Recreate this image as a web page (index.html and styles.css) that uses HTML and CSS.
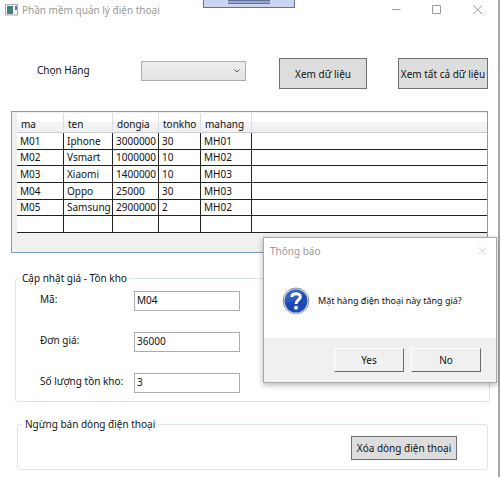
FILE: index.html
```html
<!DOCTYPE html>
<html lang="vi">
<head>
<meta charset="utf-8">
<title>Phần mềm quản lý điện thoại</title>
<link rel="stylesheet" href="styles.css">
</head>
<body>
<main class="window">
  <header class="titlebar">
    <svg class="app-icon" width="13" height="12" viewBox="0 0 13 12" aria-hidden="true">
      <rect x=".5" y=".5" width="12" height="10.5" fill="#f4f4f4" stroke="#aaa"/>
      <rect x="2" y="2" width="6" height="8" fill="#43817b"/>
      <rect x="10" y="2" width="2" height="4" fill="#5280b0"/>
    </svg>
    <h1 class="title">Phần mềm quản lý điện thoại</h1>
    <div class="window-controls">
      <button class="control" aria-label="Thu nhỏ"><svg width="10" height="10" viewBox="0 0 10 10"><path d="M1 4.500h8.500"/></svg></button>
      <button class="control" aria-label="Phóng to"><svg width="10" height="10" viewBox="0 0 10 10"><path d="M.5 .5h8v8h-8z"/></svg></button>
      <button class="control" aria-label="Đóng"><svg width="10" height="10" viewBox="0 0 10 10"><path d="M.5 .5l8.500 8.500M9 .5l-8.500 8.500"/></svg></button>
    </div>
    <div class="debug-bar"><span class="grip"></span></div>
  </header>

  <section class="filter">
    <label class="filter-label" for="brand">Chọn Hãng</label>
    <div class="select-box">
      <select id="brand" class="brand"><option></option></select>
      <svg class="chevron" width="6" height="4" viewBox="0 0 6 4" aria-hidden="true"><path d="M.5 .5L3 3L5.500 .5"/></svg>
    </div>
    <button class="button button-tall">Xem dữ liệu</button>
    <button class="button button-tall button-all">Xem tất cả dữ liệu</button>
  </section>

  <section class="grid-frame">
    <table class="grid">
      <colgroup><col class="c-ma"><col class="c-ten"><col class="c-gia"><col class="c-ton"><col class="c-hang"><col></colgroup>
      <thead><tr><th>ma</th><th>ten</th><th>dongia</th><th>tonkho</th><th>mahang</th><th></th></tr></thead>
      <tbody>
        <tr><td>M01</td><td>Iphone</td><td>3000000</td><td>30</td><td>MH01</td><td></td></tr>
        <tr><td>M02</td><td>Vsmart</td><td>1000000</td><td>10</td><td>MH02</td><td></td></tr>
        <tr><td>M03</td><td>Xiaomi</td><td>1400000</td><td>10</td><td>MH03</td><td></td></tr>
        <tr><td>M04</td><td>Oppo</td><td>25000</td><td>30</td><td>MH03</td><td></td></tr>
        <tr><td>M05</td><td>Samsung</td><td>2900000</td><td>2</td><td>MH02</td><td></td></tr>
        <tr><td></td><td></td><td></td><td></td><td></td><td></td></tr>
      </tbody>
    </table>
  </section>

  <fieldset class="group group-update">
    <legend>Cập nhật giá - Tồn kho</legend>
    <div class="fields">
      <label for="code">Mã:</label><input id="code" type="text" value="M04">
      <label for="price">Đơn giá:</label><input id="price" type="text" value="36000">
      <label for="stock">Số lượng tồn kho:</label><input id="stock" type="text" value="3">
    </div>
  </fieldset>

  <fieldset class="group group-stop">
    <legend>Ngừng bán dòng điện thoại</legend>
    <button class="button button-delete">Xóa dòng điện thoại</button>
  </fieldset>
</main>

<div class="dialog" role="dialog" aria-labelledby="dialog-title">
  <div class="dialog-head">
    <h2 class="dialog-title" id="dialog-title">Thông báo</h2>
    <button class="dialog-close" aria-label="Đóng"><svg width="10" height="10" viewBox="0 0 10 10"><path d="M1 1l8 8M9 1l-8 8"/></svg></button>
  </div>
  <div class="dialog-body">
    <svg class="question" width="28" height="28" viewBox="0 0 28 28" aria-hidden="true">
      <defs>
        <linearGradient id="ball" x1="0" y1="0" x2="1" y2="1"><stop offset="0" stop-color="#2c5fd0"/><stop offset=".5" stop-color="#1c46b0"/><stop offset="1" stop-color="#2450b8"/></linearGradient>
        <linearGradient id="rim" x1="0" y1="0" x2="0" y2="1"><stop offset="0" stop-color="#8e9296"/><stop offset="1" stop-color="#a4a6a8"/></linearGradient>
      </defs>
      <circle cx="14" cy="14" r="13" fill="#dfe1e3" stroke="url(#rim)"/>
      <circle cx="14" cy="14" r="11.500" fill="url(#ball)"/>
      <path d="M3 15A11 11 0 0 1 23 7Q17 15 3 15z" fill="#5b86e4" opacity=".25"/>
      <path d="M9.800 10C9.900 5.700 18.300 5.600 18.300 9.900C18.300 13 14 13 14 17" fill="none" stroke="#fff" stroke-width="3"/>
      <circle cx="14" cy="20.800" r="2" fill="#fff"/>
    </svg>
    <p class="message">Mặt hàng điện thoại này tăng giá?</p>
  </div>
  <div class="dialog-foot">
    <button class="dialog-button">Yes</button>
    <button class="dialog-button">No</button>
  </div>
</div>
</body>
</html>
```
FILE: styles.css
```css
* {
  box-sizing: border-box;
}

body {
  margin: 0;
  min-height: 100vh;
  display: flex;
  position: relative;
  overflow: hidden;
  background: #fff;
  color: #111;
  font-family: "Noto Sans", "Open Sans", sans-serif;
  font-size: 10px;
  line-height: 14px;
}

button, input, select {
  font: inherit;
  color: inherit;
  margin: 0;
  padding: 0;
  border-radius: 0;
}

h1, h2, p {
  margin: 0;
  font-size: 10px;
  font-weight: 400;
}

.window {
  flex: 1;
  min-width: 0;
  border-right: 2px solid #a2a8ad;
}

/* Title bar */
.titlebar {
  position: relative;
  display: flex;
  align-items: center;
  height: 20px;
  padding-left: 5px;
}

.title {
  flex: 1;
  margin-left: 4px;
  color: #999;
}

.window-controls {
  display: flex;
}

.control {
  display: flex;
  align-items: center;
  justify-content: center;
  width: 41px;
  height: 20px;
  border: 0;
  background: none;
}

.control svg, .dialog-close svg {
  fill: none;
  stroke: #999;
}

.debug-bar {
  position: absolute;
  top: 0;
  left: 203px;
  width: 92px;
  height: 8px;
  display: flex;
  justify-content: center;
  border: 1px solid #65719c;
  border-top: 0;
  background: #ccd5f0;
}

.grip {
  width: 42px;
  height: 4px;
  border: 1px solid #65719c;
  border-width: 1px 0;
  background: #9aa6cc;
}

/* Filter row */
.filter {
  display: flex;
  align-items: center;
  margin: 38px 10px 0 37px;
}

.filter-label {
  width: 104px;
  margin-bottom: 8px;
}

.select-box {
  position: relative;
  width: 105px;
  height: 20px;
  margin: 0 33px 6px 0;
}

.brand {
  appearance: none;
  display: block;
  width: 100%;
  height: 100%;
  border: 1px solid #acacac;
  background: linear-gradient(#eee, #e3e3e3);
}

.chevron {
  position: absolute;
  right: 6px;
  top: 8px;
  fill: none;
  stroke: #555;
  pointer-events: none;
}

.button {
  border: 1px solid #707070;
  background: #ddd;
  white-space: nowrap;
}

.button-tall {
  width: 88px;
  height: 31px;
}

.button-all {
  width: 90px;
  margin-left: auto;
}

/* Data grid */
.grid-frame {
  height: 142px;
  margin: 22px 10px 0 11px;
  padding: 1px 0 0 5px;
  border: 1px solid #7c9bbd;
  background: #f0f0f0;
}

.grid {
  width: 100%;
  height: 120px;
  table-layout: fixed;
  border-collapse: separate;
  border-spacing: 0;
  background: #fff;
}

.c-ma { width: 47px; }
.c-ten { width: 49px; }
.c-gia { width: 46px; }
.c-ton { width: 42px; }
.c-hang { width: 51px; }

.grid th {
  height: 20px;
  padding: 2px 0 0 4px;
  border-right: 1px solid #dcdddf;
  border-bottom: 1px solid #ccc;
  background: linear-gradient(#fff 45%, #f3f4f6 45%, #eff0f2);
  font-weight: 400;
  text-align: left;
}

.grid td {
  height: 16px;
  padding: 0 0 0 3px;
  border-right: 1px solid #222;
  border-bottom: 1px solid #222;
  white-space: nowrap;
}

.grid th:last-child, .grid td:last-child {
  border-right: 0;
}

/* Group boxes */
.group {
  min-width: 0;
  border: 1px solid #dce5ea;
  border-radius: 3px;
}

.group legend {
  padding: 0 3px;
}

.group-update {
  margin: 18px 8px 0 15px;
  padding: 0 0 8px 24px;
}

.group-update legend {
  margin-left: -21px;
}

.fields {
  display: grid;
  grid-template-columns: 94px 106px;
  row-gap: 21px;
  padding-top: 6px;
}

.fields label {
  padding-top: 1px;
  white-space: nowrap;
}

.fields input {
  height: 20px;
  padding: 0 2px 3px;
  border: 1px solid #abadb3;
  background: #fff;
}

.group-stop {
  display: flex;
  justify-content: flex-end;
  margin: 15px 10px 0 17px;
  padding: 5px 30px 9px 4px;
}

.button-delete {
  width: 106px;
  height: 24px;
}

/* Message box */
.dialog {
  position: absolute;
  top: 237px;
  right: 3px;
  width: 234px;
  border: 1px solid #aaa;
  background: #fff;
  box-shadow: 0 2px 6px rgba(0, 0, 0, .3);
}

.dialog-head {
  display: flex;
  align-items: center;
  justify-content: space-between;
  height: 26px;
  padding: 0 9px 0 6px;
}

.dialog-title {
  color: #999;
}

.dialog-close {
  display: flex;
  border: 0;
  background: none;
}

.dialog-close svg {
  stroke: #ddd;
}

.dialog-body {
  display: flex;
  align-items: center;
  gap: 8px;
  height: 74px;
  padding: 0 0 0 18px;
}

.message {
  font-size: 9px;
  white-space: nowrap;
}

.dialog-foot {
  display: flex;
  justify-content: flex-end;
  gap: 7px;
  padding: 10px 15px;
  background: #f0f0f0;
}

.dialog-button {
  width: 70px;
  height: 24px;
  border: 1px solid #fff;
  border-right-color: #696969;
  border-bottom-color: #696969;
  background: #f0f0f0;
}
```
